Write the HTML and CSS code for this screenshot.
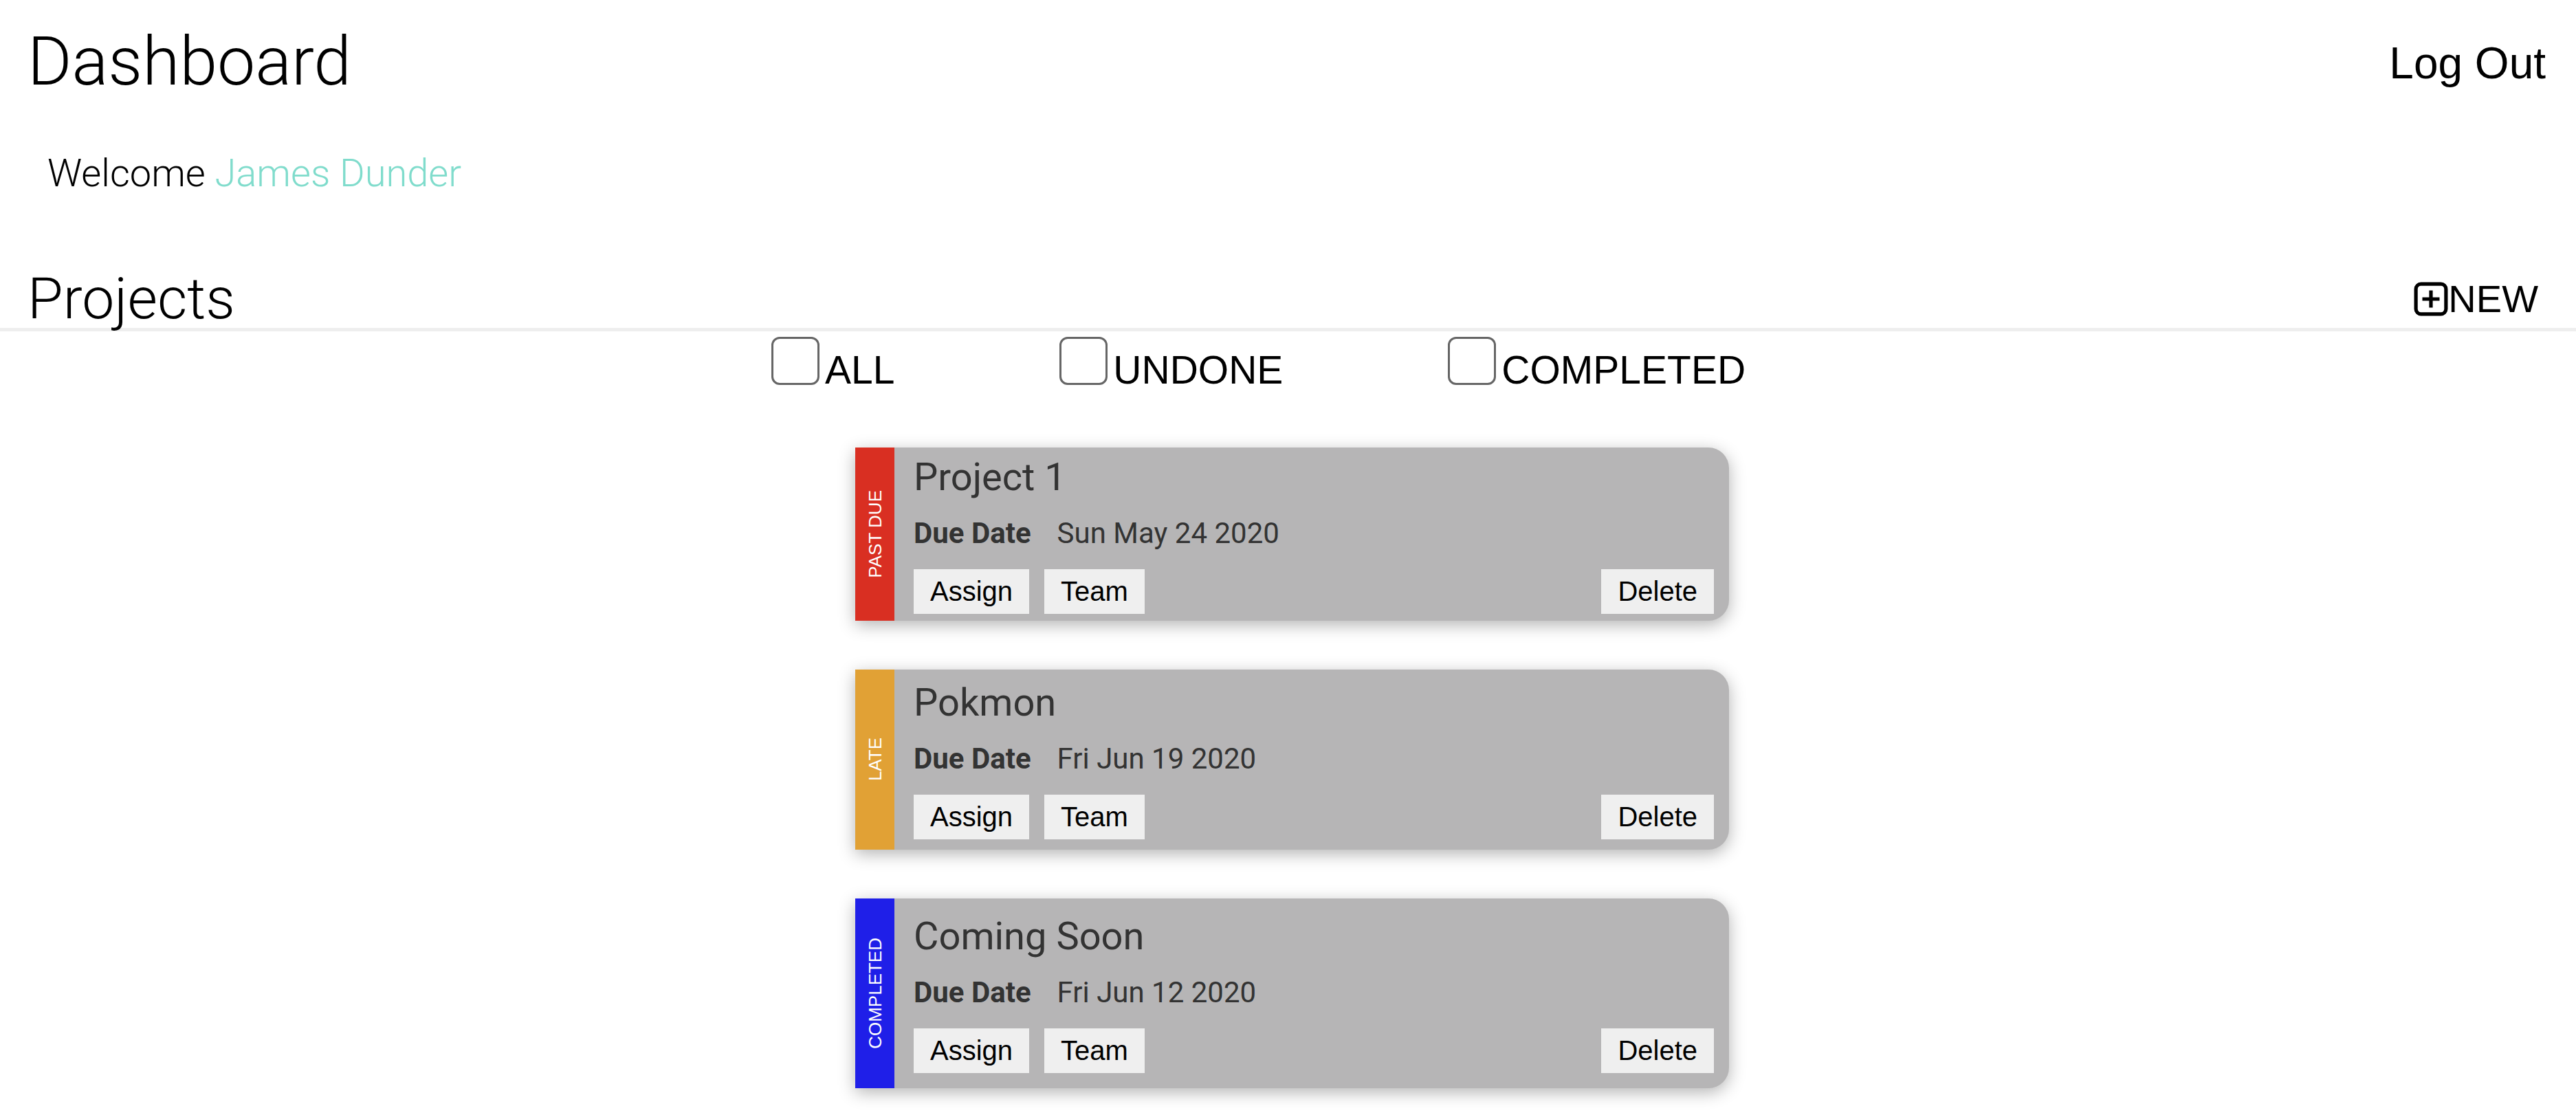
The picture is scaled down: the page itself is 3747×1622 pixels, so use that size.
FILE: index.html
```html
<!DOCTYPE html>
<html lang="en">
<head>
<meta charset="utf-8">
<title>Dashboard</title>
<link rel="stylesheet" href="styles.css">
</head>
<body>
<header class="topbar">
  <h1 class="page-title">Dashboard</h1>
  <a class="logout" href="#">Log Out</a>
</header>

<p class="welcome">Welcome <span class="user-name">James Dunder</span></p>

<div class="section-head">
  <h2 class="section-title">Projects</h2>
  <button class="new-btn" type="button">
    <svg class="new-icon" viewBox="0 0 48 48" width="50" height="50" aria-hidden="true">
      <rect x="3" y="3" width="42" height="42" rx="7" ry="7" fill="none" stroke="#000" stroke-width="5"/>
      <path d="M24 12 V36 M12 24 H36" stroke="#000" stroke-width="5" fill="none"/>
    </svg>NEW</button>
</div>

<div class="filters">
  <label class="filter"><span class="check"></span><span class="filter-text">ALL</span></label>
  <label class="filter"><span class="check"></span><span class="filter-text">UNDONE</span></label>
  <label class="filter"><span class="check"></span><span class="filter-text">COMPLETED</span></label>
</div>

<main class="project-list">
  <article class="card card--past">
    <div class="card-status status--past"><span class="status-text">PAST DUE</span></div>
    <div class="card-body">
      <h3 class="card-title">Project 1</h3>
      <div class="due"><span class="due-label">Due Date</span><span class="due-value">Sun May 24 2020</span></div>
      <div class="card-actions">
        <button class="btn" type="button">Assign</button>
        <button class="btn" type="button">Team</button>
        <button class="btn btn--delete" type="button">Delete</button>
      </div>
    </div>
  </article>

  <article class="card card--late">
    <div class="card-status status--late"><span class="status-text">LATE</span></div>
    <div class="card-body">
      <h3 class="card-title">Pokmon</h3>
      <div class="due"><span class="due-label">Due Date</span><span class="due-value">Fri Jun 19 2020</span></div>
      <div class="card-actions">
        <button class="btn" type="button">Assign</button>
        <button class="btn" type="button">Team</button>
        <button class="btn btn--delete" type="button">Delete</button>
      </div>
    </div>
  </article>

  <article class="card card--done">
    <div class="card-status status--done"><span class="status-text">COMPLETED</span></div>
    <div class="card-body">
      <h3 class="card-title">Coming Soon</h3>
      <div class="due"><span class="due-label">Due Date</span><span class="due-value">Fri Jun 12 2020</span></div>
      <div class="card-actions">
        <button class="btn" type="button">Assign</button>
        <button class="btn" type="button">Team</button>
        <button class="btn btn--delete" type="button">Delete</button>
      </div>
    </div>
  </article>
</main>
</body>
</html>
```

FILE: styles.css
```css
* { box-sizing: border-box; }

body {
  margin: 0;
  font-family: Roboto, "Liberation Sans", sans-serif;
  color: #000;
  background: #fff;
}

.topbar {
  display: flex;
  justify-content: space-between;
  align-items: flex-start;
  padding: 0 44px 0 40px;
}

.page-title {
  margin: 30px 0 0;
  font-size: 98.5px;
  font-weight: 300;
  line-height: 120px;
}

.logout {
  margin-top: 55px;
  font-family: "Liberation Sans", Arial, sans-serif;
  font-size: 64px;
  line-height: 74px;
  color: #000;
  text-decoration: none;
}

.welcome {
  margin: 69px 0 0;
  padding-left: 69px;
  font-size: 56px;
  font-weight: 300;
  line-height: 66px;
}

.user-name { color: #80dccc; }

.section-head {
  display: flex;
  justify-content: space-between;
  align-items: flex-end;
  margin-top: 108px;
  padding: 0 55px 0 40px;
  border-bottom: 5px solid #eeeeee;
}

.section-title {
  margin: 0;
  font-size: 84px;
  font-weight: 300;
  line-height: 84px;
}

.new-btn {
  display: flex;
  align-items: center;
  margin: 0 0 11px;
  padding: 0;
  border: 0;
  background: none;
  font-family: "Liberation Sans", Arial, sans-serif;
  font-size: 56px;
  line-height: 63px;
  color: #000;
}

.new-icon { display: block; flex: none; }

.filters {
  display: flex;
  justify-content: center;
  gap: 240px;
  padding: 8px 86px 0 0;
}

.filter {
  display: flex;
  align-items: flex-end;
  gap: 8px;
  font-family: "Liberation Sans", Arial, sans-serif;
  font-size: 57px;
  line-height: 44px;
}

.check {
  width: 70px;
  height: 70px;
  border: 3px solid #666;
  border-radius: 12px;
  background: #fff;
}

.project-list {
  display: flex;
  flex-direction: column;
  align-items: center;
  gap: 71px;
  margin-top: 91px;
  padding: 0 0 40px 12px;
}

.card {
  display: flex;
  width: 1271px;
  background: #b6b5b6;
  border-radius: 0 30px 30px 0;
  box-shadow: 0 6px 24px rgba(0, 0, 0, 0.3);
}

.card--past { min-height: 252px; }
.card--late { min-height: 262px; }
.card--done { min-height: 276px; }

.card-status {
  flex: none;
  width: 57px;
  display: flex;
  align-items: center;
  justify-content: center;
}

.status--past { background: #d92f22; }
.status--late { background: #e1a135; }
.status--done { background: #1f1fe8; }

.status-text {
  writing-mode: vertical-rl;
  transform: rotate(180deg);
  font-family: "Liberation Sans", Arial, sans-serif;
  font-size: 26px;
  line-height: 1;
  color: #fff;
  white-space: nowrap;
}

.card-body {
  flex: 1;
  display: flex;
  flex-direction: column;
  justify-content: center;
  padding: 11px 22px 10px 28px;
}

.card-title {
  margin: 0 0 26px;
  font-size: 56px;
  font-weight: 400;
  line-height: 64px;
  color: #333;
}

.due {
  display: flex;
  gap: 38px;
  margin-bottom: 28px;
  font-size: 42px;
  line-height: 48px;
  color: #333;
}

.due-label { font-weight: 700; }

.card-actions {
  display: flex;
  gap: 22px;
}

.btn {
  padding: 10px 24px;
  border: 0;
  border-radius: 0;
  background: #efefef;
  font-family: "Liberation Sans", Arial, sans-serif;
  font-size: 40px;
  line-height: 45px;
  color: #000;
}

.btn--delete { margin-left: auto; }
```
